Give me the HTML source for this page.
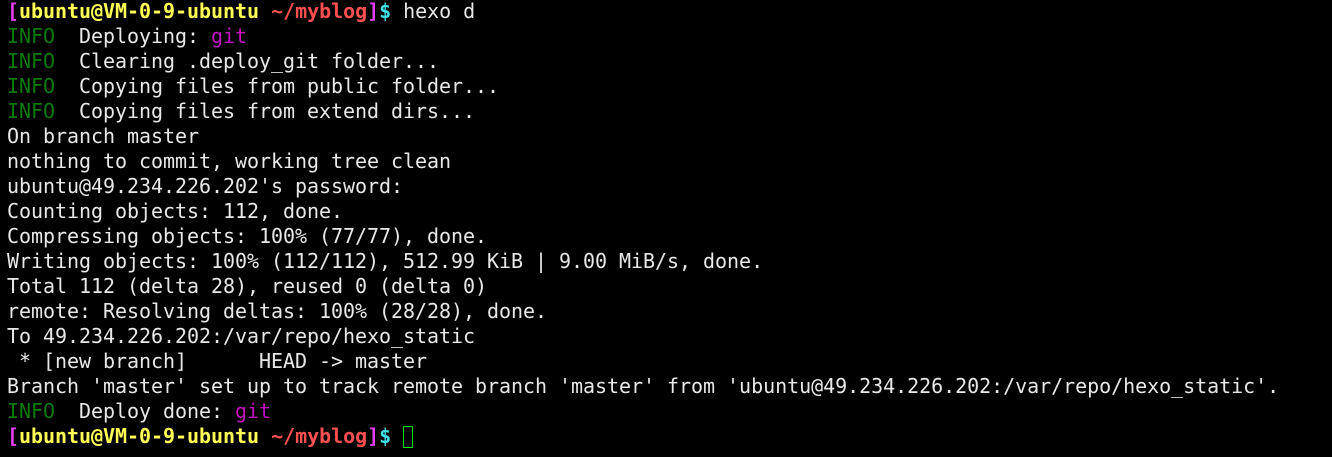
<!DOCTYPE html>
<html><head><meta charset="utf-8"><style>
html,body{margin:0;padding:0;background:#000;width:1332px;height:457px;overflow:hidden}
pre{margin:-1px 0 0 0;padding:0 0 0 7px;font-family:"DejaVu Sans Mono","Liberation Mono",monospace;font-size:20px;letter-spacing:-0.04px;line-height:25px;color:#e8e8e8;white-space:pre}
.b{font-weight:bold}.m{color:#e040f0}.y{color:#ffff55}.r{color:#ff5050}.c{color:#40e0e8}
.g{color:#0a7a0a}.p{color:#c010c0}
.cur{display:inline-block;width:10px;height:22px;border:1px solid #00e000;vertical-align:-5px;box-sizing:border-box}
</style></head><body><pre><span class="b"><span class="m">[</span><span class="y">ubuntu@VM-0-9-ubuntu</span> <span class="r">~/myblog</span><span class="m">]</span><span class="c">$</span></span> hexo d
<span class="g">INFO</span>  Deploying: <span class="p">git</span>
<span class="g">INFO</span>  Clearing .deploy_git folder...
<span class="g">INFO</span>  Copying files from public folder...
<span class="g">INFO</span>  Copying files from extend dirs...
On branch master
nothing to commit, working tree clean
ubuntu@49.234.226.202's password:
Counting objects: 112, done.
Compressing objects: 100% (77/77), done.
Writing objects: 100% (112/112), 512.99 KiB | 9.00 MiB/s, done.
Total 112 (delta 28), reused 0 (delta 0)
remote: Resolving deltas: 100% (28/28), done.
To 49.234.226.202:/var/repo/hexo_static
 * [new branch]      HEAD -> master
Branch 'master' set up to track remote branch 'master' from 'ubuntu@49.234.226.202:/var/repo/hexo_static'.
<span class="g">INFO</span>  Deploy done: <span class="p">git</span>
<span class="b"><span class="m">[</span><span class="y">ubuntu@VM-0-9-ubuntu</span> <span class="r">~/myblog</span><span class="m">]</span><span class="c">$</span></span> <span class="cur"></span></pre></body></html>
